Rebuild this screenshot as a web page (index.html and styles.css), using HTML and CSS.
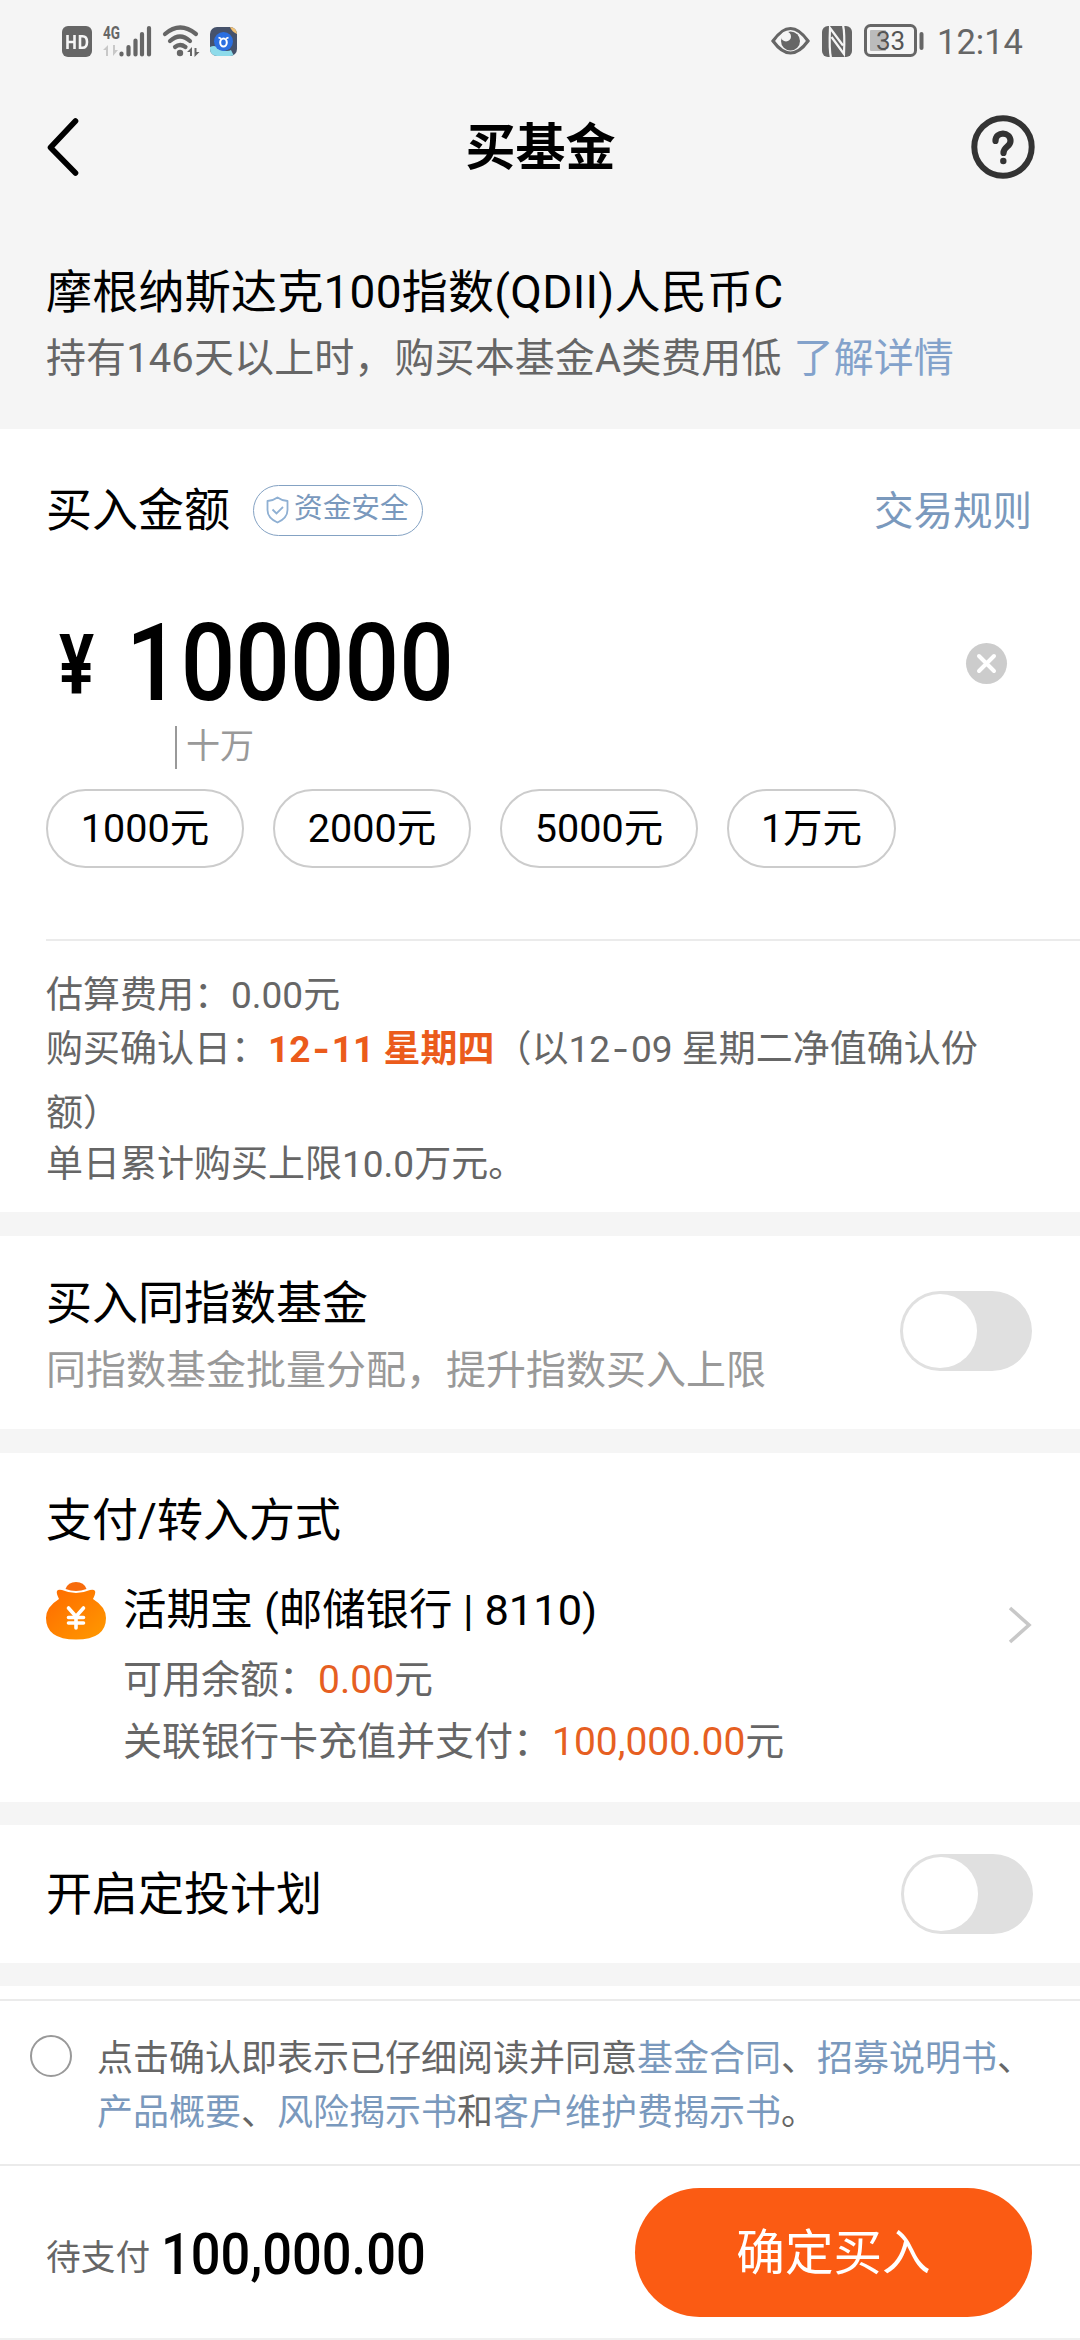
FILE: index.html
```html
<!DOCTYPE html>
<html lang="zh-CN">
<head>
<meta charset="utf-8">
<title>买基金</title>
<link rel="stylesheet" href="styles.css">
</head>
<body>
<div class="page">
  <header class="status">
    <div class="status-left">
      <svg class="ico-hd" width="30" height="31" viewBox="0 0 30 31"><rect width="30" height="31" rx="6" fill="#666"/><path d="M5.500 9v14M12.500 9v14M5.500 16h7M18 10.200v11.600h2.500q4.500 0 4.500-5.800t-4.500-5.800z" fill="none" stroke="#f5f5f5" stroke-width="2.600"/></svg>
      <svg class="ico-net" width="50" height="34" viewBox="0 0 50 34"><text x="0" y="15" class="net" textLength="17" lengthAdjust="spacingAndGlyphs">4G</text><path d="M0 26l5-5v11H3v-6zM15 26l-5 6V21h2v5z" fill="#c8c8c8"/><g stroke="#666" stroke-width="4.200" stroke-linecap="round"><path d="M18.500 29.500v1M25.500 23v7.500M32.500 16.500v14M39 10v20.500M46 4v26.500"/></g></svg>
      <svg class="ico-wifi" width="39" height="34" viewBox="0 0 39 34"><g fill="none" stroke="#666" stroke-width="4.200" stroke-linecap="round"><path d="M3 10Q18 -3 34 10M8 17Q18 8 28 17M13 23Q18 19 23.500 23"/></g><circle cx="18" cy="29" r="3.200" fill="#666"/><path d="M25 28l5-5v9h-2v-4zM37.500 28l-5 5v-9h2v4z" fill="#666"/></svg>
      <svg width="27" height="29" viewBox="0 0 27 29"><defs><clipPath id="app"><rect width="27" height="29" rx="7"/></clipPath></defs><g clip-path="url(#app)"><path fill="#46526b" d="M0 0h27v29H0z"/><path fill="#f2c275" d="M20 0h7v7q-5-2-7-7z"/><path fill="#8edbea" d="M0 20q6-3 10 3 8 2 11 0l3 6H0z"/><circle cx="13.500" cy="14.500" r="9.500" fill="#2b6fe0"/><ellipse cx="13.500" cy="15.500" rx="3.300" ry="4" fill="none" stroke="#fff" stroke-width="2"/><path d="M8.500 10.500l2.500 1M18.500 10.500l-2.500 1" stroke="#fff" stroke-width="1.800"/></g></svg>
    </div>
    <div class="status-right">
      <svg width="39" height="28" viewBox="0 0 39 28"><path d="M2 14Q19.500-11 37 14 19.500 38 2 14z" fill="none" stroke="#666" stroke-width="3.200"/><circle cx="19.500" cy="14" r="9.500" fill="#666"/><circle cx="15" cy="9.500" r="5" fill="#f5f5f5"/></svg>
      <svg width="30" height="31" viewBox="0 0 30 31"><rect width="30" height="31" rx="6" fill="#666"/><path d="M9 32Q7 24 8 2l13 17.500M21 -1q2 8 1 29L9.500 11" fill="none" stroke="#f5f5f5" stroke-width="2.200"/></svg>
      <svg width="60" height="34" viewBox="0 0 60 34"><rect x="1.500" y="1.500" width="50" height="30" rx="5" fill="none" stroke="#666" stroke-width="3"/><rect x="6" y="6" width="16" height="21" rx="1" fill="#bbb"/><rect x="55.500" y="8" width="4" height="18" rx="2" fill="#666"/><text x="26.500" y="26" class="bat" text-anchor="middle">33</text></svg>
      <span class="clock">12:14</span>
    </div>
  </header>

  <nav class="nav">
    <svg width="34" height="60" viewBox="0 0 34 60"><path d="M29.500 4L4.500 30.500 29.500 56" fill="none" stroke="#000" stroke-width="5.600" stroke-linecap="round" stroke-linejoin="round"/></svg>
    <h1>买基金</h1>
    <svg width="64" height="64" viewBox="0 0 64 64"><circle cx="32" cy="32" r="28.700" fill="none" stroke="#333" stroke-width="6"/><path d="M24.500 26c0-10 15-9.500 15 0 0 6-7 5.500-7 12" fill="none" stroke="#333" stroke-width="6.200" stroke-linecap="round"/><circle cx="32.300" cy="46" r="3.200" fill="#333"/></svg>
  </nav>

  <section class="fund">
    <h2>摩根纳斯达克100指数(QDII)人民币C</h2>
    <p>持有146天以上时，购买本基金A类费用低 <a>了解详情</a></p>
  </section>

  <section class="amount">
    <div class="amount-head">
      <h2>买入金额</h2>
      <span class="badge"><svg width="25" height="28" viewBox="0 0 25 28"><path d="M12.500 1.500q4 3 10 3.500v9q0 8-10 12.500Q2.500 22 2.500 14V5q6-.5 10-3.500z" fill="none" stroke="#8fb0d3" stroke-width="1.800" stroke-linejoin="round"/><path d="M7.500 13.500l4 4 6.500-6.500" fill="none" stroke="#8fb0d3" stroke-width="1.800"/></svg><span>资金安全</span></span>
      <a class="rules">交易规则</a>
    </div>
    <div class="amount-input">
      <span class="yen">¥</span><span class="value">100000</span>
      <svg class="clear" width="41" height="41" viewBox="0 0 41 41"><circle cx="20.500" cy="20.500" r="20.500" fill="#ccc"/><path d="M13 13l15 15M28 13L13 28" stroke="#fff" stroke-width="4" stroke-linecap="round"/></svg>
    </div>
    <div class="unit">十万</div>
    <div class="chips"><span>1000元</span><span>2000元</span><span>5000元</span><span class="short">1万元</span></div>
    <div class="notes">
      <p>估算费用：0.00元</p>
      <p class="confirm">购买确认日：<b>12<i>-</i>11 星期四</b>（以12<i>-</i>09 星期二净值确认份额）</p>
      <p>单日累计购买上限10.0万元。</p>
    </div>
  </section>

  <section class="same">
    <div>
      <h2>买入同指数基金</h2>
      <p>同指数基金批量分配，提升指数买入上限</p>
    </div>
    <span class="toggle"></span>
  </section>

  <section class="pay">
    <h2>支付/转入方式</h2>
    <div class="method">
      <svg width="60" height="60" viewBox="0 0 60 60"><defs><linearGradient id="bag" x1="0" y1="0" x2="1" y2="1"><stop offset="0" stop-color="#ff6a00"/><stop offset="1" stop-color="#ff9a00"/></linearGradient></defs><path fill="#f76b0c" d="M19.500 8Q22 1 30 1t10.500 7Q30 12 19.500 8z"/><path fill="url(#bag)" d="M11 10q1-2 5-1 14 6 28 0 4-1 5 1 1 2-2 8 13 8 13 19 0 21.500-30 21.500T0 37q0-11 13-19-3-6-2-8z"/><path d="M22.500 27l7.500 8.500 7.500-8.500M30 35.500V47M22.500 36.500h15M22.500 42h15" fill="none" stroke="#fff" stroke-width="3.600" stroke-linecap="round"/></svg>
      <div class="method-text">
        <h3>活期宝 (邮储银行 | 8110)</h3>
        <p>可用余额：<em>0.00</em>元</p>
        <p>关联银行卡充值并支付：<em>100,000.00</em>元</p>
      </div>
      <svg class="arrow" width="24" height="38" viewBox="0 0 24 38"><path d="M2 2l19 17L2 36" fill="none" stroke="#c8c8c8" stroke-width="3.600"/></svg>
    </div>
  </section>

  <section class="plan">
    <h2>开启定投计划</h2>
    <span class="toggle"></span>
  </section>

  <section class="agree">
    <span class="radio"></span>
    <p>点击确认即表示已仔细阅读并同意<a>基金合同</a>、<a>招募说明书</a>、<br><a>产品概要</a>、<a>风险揭示书</a>和<a>客户维护费揭示书</a>。</p>
  </section>

  <footer class="bar">
    <span class="due">待支付</span><span class="total">100,000.00</span>
    <button class="buy">确定买入</button>
  </footer>
</div>
</body>
</html>
```
FILE: styles.css
```css
* { box-sizing: border-box; }
body, h1, h2, h3, p { margin: 0; font-weight: 400; }
body {
  font-family: Roboto, "Noto Sans CJK SC", sans-serif;
  background: #fff;
  color: #000;
  text-spacing-trim: space-all;
}
.page { width: 1080px; height: 2340px; display: flex; flex-direction: column; overflow: hidden; }
.page > * { flex: none; }
svg { display: block; flex: none; overflow: visible; }
a { color: #7a99bd; }
h2 { font-size: 46px; line-height: 60px; white-space: nowrap; }

.status { height: 80px; background: #f5f5f5; display: flex; justify-content: space-between; padding: 0 60px 0 62px; }
.status-left, .status-right { display: flex; align-items: center; height: 82px; }
.ico-hd { margin-right: 11px; }
.ico-wifi { margin: 0 9px 0 9px; }
.net { font: 700 19px Roboto, sans-serif; fill: #666; }
.status-right { gap: 12px; }
.bat { font: 400 26px Roboto, sans-serif; fill: #555; }
.clock { font-size: 34.500px; color: #666; width: 83px; white-space: nowrap; margin-left: 1px; padding-top: 2px; }

.nav { height: 134px; background: #f5f5f5; display: flex; align-items: center; justify-content: space-between; padding: 0 45px 0 46px; }
.nav h1 { font-size: 50px; font-weight: 700; line-height: 60px; margin-left: 30px; padding-top: 2px; }

.fund { height: 215px; background: #f5f5f5; padding: 48px 46px 0; }
.fund h2 { letter-spacing: .25px; }
.fund p { font-size: 40px; letter-spacing: .1px; line-height: 56px; margin-top: 9px; color: #666; white-space: nowrap; }
.fund a { color: #83a2cb; margin-left: 2px; }

.amount { height: 783px; }
.amount-head { display: flex; align-items: center; padding: 51px 48px 0 46px; height: 111px; }
.badge { display: flex; align-items: center; gap: 4px; height: 51px; width: 170px; margin-left: 23px; padding-left: 11px; border: 1.500px solid #84a2c3; border-radius: 26px; font-size: 28.700px; line-height: 40px; color: #7a99bd; white-space: nowrap; }
.badge span { padding-bottom: 4px; }
.rules { margin-left: auto; font-size: 39.500px; padding-bottom: 6px; }
.amount-input { display: flex; align-items: center; height: 140px; margin-top: 53px; padding: 0 73px 0 59px; }
.yen { font-size: 84px; font-weight: 700; width: 67px; line-height: 90px; transform-origin: left; transform: scaleX(.78); padding-top: 6px; }
.value { font-size: 108px; font-weight: 500; line-height: 140px; transform-origin: left; transform: scaleX(.89); }
.clear { margin-left: auto; }
.unit { margin: -7px 0 0 175px; border-left: 2px solid #999; padding-left: 9px; height: 43px; line-height: 41px; font-size: 34px; color: #999; }
.chips { display: flex; gap: 29px; margin: 20px 0 0 46px; }
.chips span { width: 198px; height: 79px; line-height: 75px; text-align: center; border: 2px solid #ccc; border-radius: 40px; font-size: 39.500px; }
.chips .short { width: 169px; }
.notes { margin: 71px 0 0 46px; padding: 29px 80px 0 0; border-top: 2px solid #ebebeb; color: #666; font-size: 37px; }
.notes p { line-height: 52px; }
.notes .confirm { line-height: 64px; margin: -4px 0 -7px; }
.notes b { color: #eb5b1b; font-weight: 700; }
.notes i { font-style: normal; font-family: Inter, sans-serif; line-height: 1; padding: 0 2px; }

.same { height: 217px; border-top: 24px solid #f5f5f5; padding: 37px 48px 0 46px; display: flex; justify-content: space-between; }
.same p { font-size: 40px; line-height: 56px; margin-top: 10px; color: #999; }
.toggle { flex: none; width: 132px; height: 80px; border-radius: 40px; background: #e0e0e0; padding: 3px; display: flex; }
.toggle::before { content: ""; width: 74px; height: 74px; border-radius: 50%; background: #fff; }
.same .toggle { margin-top: 18px; }

.pay { height: 373px; border-top: 24px solid #f5f5f5; padding: 37px 48px 0 46px; }
.method { display: flex; margin-top: 31px; }
.method-text { padding-left: 17px; color: #666; flex: 1; }
.method h3 { font-size: 43.400px; line-height: 60px; color: #000; }
.method p { font-size: 39px; line-height: 62px; }
.method h3 + p { margin-top: 8px; }
.method em { font-style: normal; color: #e65f22; }
.arrow { margin-top: 25px; }

.plan { height: 161px; border-top: 23px solid #f5f5f5; padding: 0 47px 0 46px; display: flex; align-items: center; justify-content: space-between; }
.plan .toggle { margin-bottom: 1px; }

.agree { height: 203px; border-top: 23px solid #f5f5f5; display: flex; padding-left: 30px; background: linear-gradient(#ebebeb, #ebebeb) 0 13px / 100% 2px no-repeat; border-bottom: 2px solid #ebebeb; }
.radio { flex: none; width: 42px; height: 42px; margin-top: 49px; border: 2px solid #999; border-radius: 50%; }
.agree p { margin: 46px 0 0 25px; font-size: 36px; line-height: 54px; color: #666; white-space: nowrap; }

.bar { height: 174px; display: flex; align-items: center; padding: 0 48px 0 46px; border-bottom: 2px solid #f0f0f0; }
.due { font-size: 34.700px; color: #666; margin-top: 5px; }
.total { font-size: 57px; font-weight: 500; margin-left: 11px; padding-top: 4px; transform-origin: left; transform: scaleX(.92); }
.buy { margin: 0 0 0 auto; width: 397px; height: 129px; border: 0; border-radius: 65px; background: #fb5b13; color: #fff; font: 400 48.600px Roboto, "Noto Sans CJK SC", sans-serif; padding: 0 0 6px; }
```
